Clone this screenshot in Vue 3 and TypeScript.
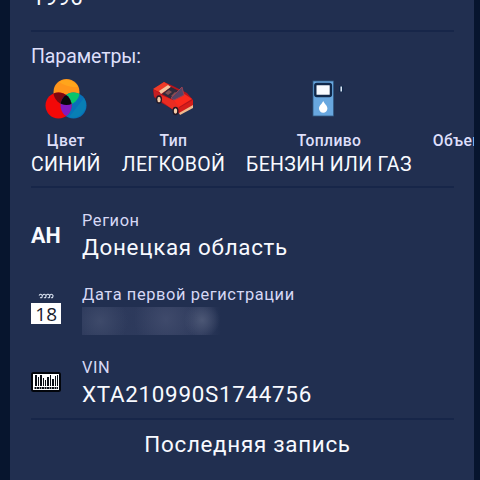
<script setup lang="ts">
interface Param { id: string; label: string; value: string }
const params: Param[] = [
  { id: 'color', label: 'Цвет', value: 'СИНИЙ' },
  { id: 'type', label: 'Тип', value: 'ЛЕГКОВОЙ' },
  { id: 'fuel', label: 'Топливо', value: 'БЕНЗИН ИЛИ ГАЗ' },
  { id: 'volume', label: 'Объем', value: '' },
]
const bars = [[4, 2, 13], [7, 1, 11], [9, 2, 13], [12, 1, 10], [14, 1, 8], [16, 2, 11], [19, 1, 13], [21, 2, 9], [24, 1, 12], [26, 1, 13]]
</script>

<template>
  <main class="screen">
    <article class="card">
      <div class="year">1996</div>
      <section class="params">
        <h2 class="heading">Параметры:</h2>
        <div class="param-list">
          <div v-for="p in params" :key="p.id" class="param" :class="p.id">
            <svg v-if="p.id === 'color'" class="picture" width="44" height="44" viewBox="0 0 44 44">
              <defs>
                <clipPath id="orange"><circle cx="22.5" cy="14" r="13" /></clipPath>
                <clipPath id="red"><circle cx="14.5" cy="27.5" r="13" /></clipPath>
              </defs>
              <circle cx="22.5" cy="14" r="13" fill="#ff951b" />
              <path d="M15 4 Q24 10 34 9 A13 13 0 0 0 15 4Z" fill="#ffa51c" />
              <circle cx="29.5" cy="27.5" r="13" fill="#0871b9" />
              <path d="M25 39 L40 20 A13 13 0 0 1 25 39Z" fill="#087fb5" />
              <circle cx="14.5" cy="27.5" r="13" fill="#f30808" />
              <g clip-path="url(#orange)">
                <circle cx="29.5" cy="27.5" r="13" fill="#09c56c" />
                <circle cx="14.5" cy="27.5" r="13" fill="#7b0710" />
              </g>
              <g clip-path="url(#red)">
                <circle cx="29.5" cy="27.5" r="13" fill="#801bc0" />
                <g clip-path="url(#orange)"><circle cx="29.5" cy="27.5" r="13" fill="#07080b" /></g>
              </g>
            </svg>
            <svg v-else-if="p.id === 'type'" class="picture" width="44" height="44" viewBox="0 0 44 44">
              <path d="M2 12 L13 4 L20 7 L36 15 L42 22 L42 28 L29 36 L23 32 L9 24 L3 19Z" fill="#b7141b" />
              <path d="M2 11 L13 4 L18 7 L8 14Z" fill="#ef3b28" />
              <path d="M3 12 L10 16 L10 23 L3 18Z" fill="#c51f22" />
              <path d="M8 13 L17 7 L20 9 L10 16Z" fill="#f2c49e" />
              <path d="M11 16 L20 9 L32 15 L22 22Z" fill="#302b3c" />
              <path d="M14 15 L18 12 L21 14 L17 17Z M20 18 L24 14 L27 16 L23 20Z" fill="#805052" />
              <path d="M10 17 L22 22 L28 28 L27 34 L21 31 L10 23Z" fill="#e92c22" />
              <path d="M22 22 L32 15 L41 21 L28 29Z" fill="#fb2a1d" />
              <path d="M20 20 L31 9 L33 17 L23 22Z" fill="#554465" stroke="#9a4051" stroke-width="1" />
              <path d="M28 30 L42 22 L42 28 L29 35Z" fill="#d51e1b" />
              <path d="M28 35 L42 27 L42 30 L29 37Z" fill="#f1ba8e" />
              <ellipse cx="8" cy="21.5" rx="3" ry="4.2" fill="#211725" />
              <ellipse cx="8" cy="21.5" rx="1.7" ry="2.8" fill="#f5cda9" />
              <ellipse cx="24.5" cy="33" rx="3" ry="4.2" fill="#211725" />
              <ellipse cx="24.5" cy="33" rx="1.7" ry="2.8" fill="#f5cda9" />
            </svg>
            <svg v-else-if="p.id === 'fuel'" class="picture" width="44" height="44" viewBox="0 0 44 44">
              <rect x="8" y="3" width="20.5" height="35" fill="#68a7df" stroke="#315982" stroke-width=".8" />
              <rect x="10.3" y="6" width="15.6" height="12" rx="1.5" fill="#f8fbff" stroke="#10284a" stroke-width="2.4" />
              <path d="M18.2 23 C17 26 14 27.5 14 30.5 A4.2 4.2 0 0 0 22.4 30.5 C22.4 27.5 19.5 26 18.2 23Z" fill="#fff" />
              <path d="M36.2 8 V14" stroke="#10284a" stroke-width="4" />
              <path d="M36.2 8.5 V13.5" stroke="#e4effd" stroke-width="1.5" />
            </svg>
            <div v-else class="picture"></div>
            <span class="param-label">{{ p.label }}</span>
            <strong class="param-value">{{ p.value }}</strong>
          </div>
        </div>
      </section>
      <section class="details">
        <div class="row">
          <b class="code">АН</b>
          <div class="copy"><span class="label">Регион</span><span class="value place">Донецкая область</span></div>
        </div>
        <div class="row">
          <svg class="icon" width="30" height="36" viewBox="0 0 30 36">
            <path d="M8 3.5 Q10 1 11.2 3.5 Q11.5 6.5 9 5.5 M11.5 3.5 Q13.5 1 15 3.5 Q15.2 6.5 13 5.5 M15 3.5 Q17 1 18.7 3.5 Q19 6.5 16.7 5.5 M18.7 3.5 Q20.7 1 22 3.5 Q22 6.5 20 5.5" fill="none" stroke="#dbe4f2" stroke-width="1.1" />
            <rect y="11" width="30" height="21" fill="#fff" />
            <text x="15.2" y="28.7" text-anchor="middle" class="day">18</text>
          </svg>
          <div class="copy"><span class="label date">Дата первой регистрации</span><span class="redacted"></span></div>
        </div>
        <div class="row">
          <svg class="icon" width="30" height="20" viewBox="0 0 30 20">
            <rect width="30" height="20" rx="2.5" fill="#02050b" />
            <rect x="2" y="2" width="26" height="16" fill="#fff" />
            <rect v-for="b in bars" :key="b[0]" :x="b[0]" :y="16 - b[2]!" :width="b[1]" :height="b[2]! - 2" fill="#090d14" />
            <path d="M3.5 16 H27" stroke="#090d14" stroke-width="1.8" stroke-dasharray="2 .5" />
          </svg>
          <div class="copy"><span class="label">VIN</span><span class="value vin">XTA210990S1744756</span></div>
        </div>
      </section>
      <footer class="last">Последняя запись</footer>
    </article>
  </main>
</template>

<style>
body { margin: 0; background: #07152e; }
</style>
<style scoped>
.screen { box-sizing: border-box; width: 480px; height: 480px; padding: 0 6px 0 10px; overflow: hidden; background: #07152e; font-family: Roboto, "Noto Sans", sans-serif; color: #f8faff; }
.card { box-sizing: border-box; height: 480px; padding: 0 20px 0 21px; overflow: hidden; background: #212f50; }
.year { display: flex; align-items: flex-end; box-sizing: border-box; height: 32px; padding: 0 0 2px 1px; font-size: 22px; line-height: 60px; letter-spacing: .4px; border-bottom: 2px solid #172649; }
.params { box-sizing: border-box; height: 156px; border-bottom: 2px solid #172649; }
.heading { margin: 0; padding-top: 13px; font-size: 19.5px; line-height: 23px; font-weight: 400; letter-spacing: -.1px; color: #dedffa; }
.param-list { display: flex; width: 443px; gap: 21px; overflow: hidden; padding-top: 10px; }
.param { display: flex; flex: none; flex-direction: column; align-items: center; }
.picture { display: block; height: 44px; }
.fuel .picture { margin-right: 4px; }
.param-label { margin-top: 8px; font-size: 15.7px; line-height: 21px; font-weight: 500; letter-spacing: .35px; color: #dedffa; }
.param-value { font-size: 19.5px; line-height: 27px; font-weight: 400; letter-spacing: .3px; white-space: nowrap; }
.details { box-sizing: border-box; height: 232px; border-bottom: 2px solid #172649; padding-top: 22px; }
.row { display: flex; height: 73.5px; }
.code { width: 51px; padding-top: 13px; font-size: 21.5px; line-height: 26px; font-weight: 700; }
.icon { flex: none; display: block; margin-right: 21px; margin-top: 8px; }
.row:last-child .icon { margin-top: 15px; }
.copy { display: flex; flex-direction: column; align-items: flex-start; }
.label { font-size: 16.4px; line-height: 22px; letter-spacing: .6px; color: #d6d8f5; }
.value { margin-top: 0; font-size: 22.4px; line-height: 30px; letter-spacing: .7px; white-space: nowrap; }
.redacted { width: 139px; height: 28px; margin-top: 1px; background: radial-gradient(circle at 18px 14px, #3e4a6a, transparent 28px), radial-gradient(circle at 84px 12px, #3f4a6b, transparent 32px), radial-gradient(circle at 120px 13px, #4c5775, transparent 18px), linear-gradient(90deg, #2b385a, #303c5e 85%, #212f50); }
.day { font: 400 19px "Open Sans", sans-serif; fill: #18202d; }
.last { padding: 9px 0 0 10px; text-align: center; font-size: 22.4px; line-height: 30px; letter-spacing: .7px; }
</style>
